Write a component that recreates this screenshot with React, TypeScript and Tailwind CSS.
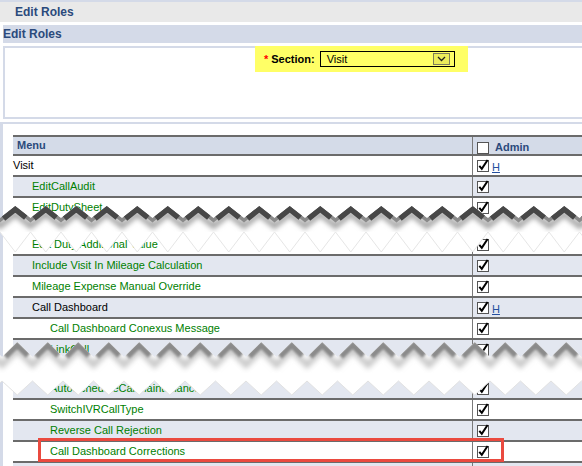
import React from "react";

const P = 30.5;
function pts(xA: number, yA: number, yB: number): [number, number][] {
  const out: [number, number][] = [];
  for (let k = -1; k <= 21; k++) {
    out.push([xA + k * P, yA]);
    out.push([xA + k * P + P / 2, yB]);
  }
  return out;
}
const toStr = (a: [number, number][], dy = 0) => a.map(([x, y]) => `${x},${y + dy}`).join(" ");

function chevrons(xA: number, yV: number, yP: number, dy: number) {
  const out: string[] = [];
  for (let k = -1; k <= 20; k++) {
    const x0 = xA + k * P;
    const xp = x0 + P / 2;
    const x1 = x0 + P;
    const a = 0.22;
    out.push(
      `M${x0 + (xp - x0) * a},${yV + (yP - yV) * a + dy} L${xp},${yP + dy} L${x1 - (x1 - xp) * 0.3},${yP + (yV - yP) * 0.7 + dy}`
    );
  }
  return out.join(" ");
}

function Tear({ top, height, z1, z2, dark, xA, yV, yP }: { top: number; height: number; z1: [number, number][]; z2: [number, number][]; dark: boolean; xA: number; yV: number; yP: number }) {
  const poly = toStr([...z1, ...[...z2].reverse()]);
  const id = dark ? "t1" : "t2";
  return (
    <svg className="absolute left-0" style={{ top }} width={582} height={height} viewBox={`0 0 582 ${height}`}>
      <defs>
        <filter id={`${id}a`} x="-5%" y="-50%" width="110%" height="200%">
          <feGaussianBlur stdDeviation={dark ? 0.7 : 1.3} />
        </filter>
        <filter id={`${id}b`} x="-5%" y="-50%" width="110%" height="200%">
          <feGaussianBlur stdDeviation={2.5} />
        </filter>
        <clipPath id={`${id}c`}>
          <polygon points={poly} />
        </clipPath>
      </defs>
      <polygon points={poly} fill="#ffffff" />
      <g clipPath={`url(#${id}c)`}>
        <polyline points={toStr(z1, 8)} fill="none" stroke={dark ? "#a8a8a8" : "#cacaca"} strokeWidth={6} filter={`url(#${id}b)`} />
        {dark ? (
          <>
            <polyline points={toStr(z1, 2)} fill="none" stroke="#8a8a8a" strokeWidth={4} filter={`url(#${id}a)`} />
            <path d={chevrons(xA, yV, yP, 3)} fill="none" stroke="#474747" strokeWidth={6} filter={`url(#${id}a)`} />
          </>
        ) : (
          <path d={chevrons(xA, yV, yP, 3)} fill="none" stroke="#8a8a8a" strokeWidth={6} filter={`url(#${id}a)`} />
        )}
      </g>
      <polyline points={toStr(z2)} fill="none" stroke={dark ? "#e6e6e6" : "#e2e2e2"} strokeWidth={1} />
    </svg>
  );
}

function Check({ checked }: { checked: boolean }) {
  return (
    <svg width={12} height={13} viewBox="0 0 12 13" className="shrink-0">
      <rect x={0.5} y={1.5} width={11} height={11} fill="#ffffff" stroke="#555555" />
      {checked && <path d="M2.3 6.8 L4.8 9.8 L10.6 1" fill="none" stroke="#000000" strokeWidth={2} />}
    </svg>
  );
}

type Row = { t: string; lvl: 0 | 1 | 2; light: boolean; black?: boolean; h?: boolean; hideTop?: boolean };

function TRow({ r }: { r: Row }) {
  const pad = r.lvl === 0 ? "pl-0" : r.lvl === 1 ? "pl-[19px]" : "pl-[37px]";
  return (
    <div
      className={`flex h-[21px] border-t-2 ${r.hideTop ? "border-white" : "border-[#6b6b6b]"} ${r.light ? "bg-[#e3e7f0]" : "bg-white"}`}
    >
      <div className={`w-[459px] shrink-0 flex items-center ${pad} text-[11px] ${r.black ? "text-black" : "text-[#008000]"}`}>
        {r.t}
      </div>
      <div className="flex-1 border-l border-[#7a7a7a] flex items-center pl-[4px]">
        <Check checked />
        {r.h && <span className="ml-[3px] mt-[3px] text-[11px] underline text-[#244f9e] leading-none">H</span>}
      </div>
    </div>
  );
}

const top: Row[] = [
  { t: "Visit", lvl: 0, light: false, black: true, h: true },
  { t: "EditCallAudit", lvl: 1, light: true },
  { t: "EditDutySheet", lvl: 1, light: false },
];
const mid: Row[] = [
  { t: "Edit Duty Additional Value", lvl: 1, light: false, hideTop: true },
  { t: "Include Visit In Mileage Calculation", lvl: 1, light: true },
  { t: "Mileage Expense Manual Override", lvl: 1, light: false },
  { t: "Call Dashboard", lvl: 1, light: true, black: true, h: true },
  { t: "Call Dashboard Conexus Message", lvl: 2, light: false },
  { t: "LinkCall", lvl: 2, light: true },
];
const bot: Row[] = [
  { t: "AutoScheduleCallMaintenance", lvl: 2, light: true, hideTop: true },
  { t: "SwitchIVRCallType", lvl: 2, light: false },
  { t: "Reverse Call Rejection", lvl: 2, light: true },
  { t: "Call Dashboard Corrections", lvl: 2, light: false },
  { t: "", lvl: 2, light: true },
];

export default function App() {
  return (
    <div className="relative w-[582px] h-[466px] overflow-hidden bg-white font-['Liberation_Sans',Arial,sans-serif]">
      <div className="h-[2px] bg-[#d4dae8]" />
      <div className="h-[20px] bg-[#e9e9e9] flex items-center pl-[15px] text-[12px] font-bold text-[#2b4a7c]">Edit Roles</div>
      <div className="h-[3px]" />
      <div className="ml-[3px] h-[18px] bg-[#d4dae8] flex items-center text-[12px] font-bold text-[#2b4a7c]">Edit Roles</div>
      <div className="h-[3px]" />
      <div className="ml-[3px] h-[73px] border-2 border-r-0 border-[#d4dae8]">
        <div className="ml-[250px] -mt-[2px] w-[213px] h-[26px] bg-[#ffff66] flex items-center pl-[9px]">
          <span className="text-[11px] font-bold text-[#ff0000] mr-[3px]">*</span>
          <span className="text-[11px] font-bold text-black">Section:</span>
          <div className="ml-[5px] w-[135px] h-[16px] border border-black flex items-center justify-between pl-[6px] pr-[4px]">
            <span className="text-[11px] text-black">Visit</span>
            <div className="w-[17px] h-[12px] border border-[#7d7d5a] bg-[#ecec5a] flex items-center justify-center">
              <svg width={9} height={6} viewBox="0 0 9 6">
                <path d="M1 1 L4.5 4.5 L8 1" fill="none" stroke="#222" strokeWidth={1.3} />
              </svg>
            </div>
          </div>
        </div>
      </div>
      <div className="h-[3px]" />
      <div className="border-l-[3px] border-t-2 border-[#d4dae8] pt-[11px] pl-[10px]">
        <div className="w-[640px]">
          <div className="flex h-[19px] border-t-2 border-[#6b6b6b] bg-[#d4dbe8]">
            <div className="w-[459px] shrink-0 flex items-center pl-[4px] text-[11px] font-bold text-[#2b4a7c]">Menu</div>
            <div className="flex-1 border-l border-[#7a7a7a] flex items-center pl-[4px] pt-[4px]">
              <Check checked={false} />
              <span className="ml-[6px] text-[11px] font-bold text-[#2b4a7c]">Admin</span>
            </div>
          </div>
          {top.map((r) => (
            <TRow key={r.t} r={r} />
          ))}
          <div className="h-[16px]" />
          {mid.map((r) => (
            <TRow key={r.t} r={r} />
          ))}
          <div className="h-[18px]" />
          {bot.map((r, i) => (
            <TRow key={r.t + i} r={r} />
          ))}
        </div>
      </div>
      <Tear top={196} height={62} z1={pts(0, 22, 10)} z2={pts(0, 36, 56)} dark xA={0} yV={22} yP={10} />
      <Tear top={336} height={64} z1={pts(2, 21, 6)} z2={pts(2, 45, 59)} dark={false} xA={2} yV={21} yP={6} />
      <div className="absolute left-[38px] top-[438px] w-[466px] h-[24px] border-[3px] border-[#ea4a3f]" />
    </div>
  );
}
